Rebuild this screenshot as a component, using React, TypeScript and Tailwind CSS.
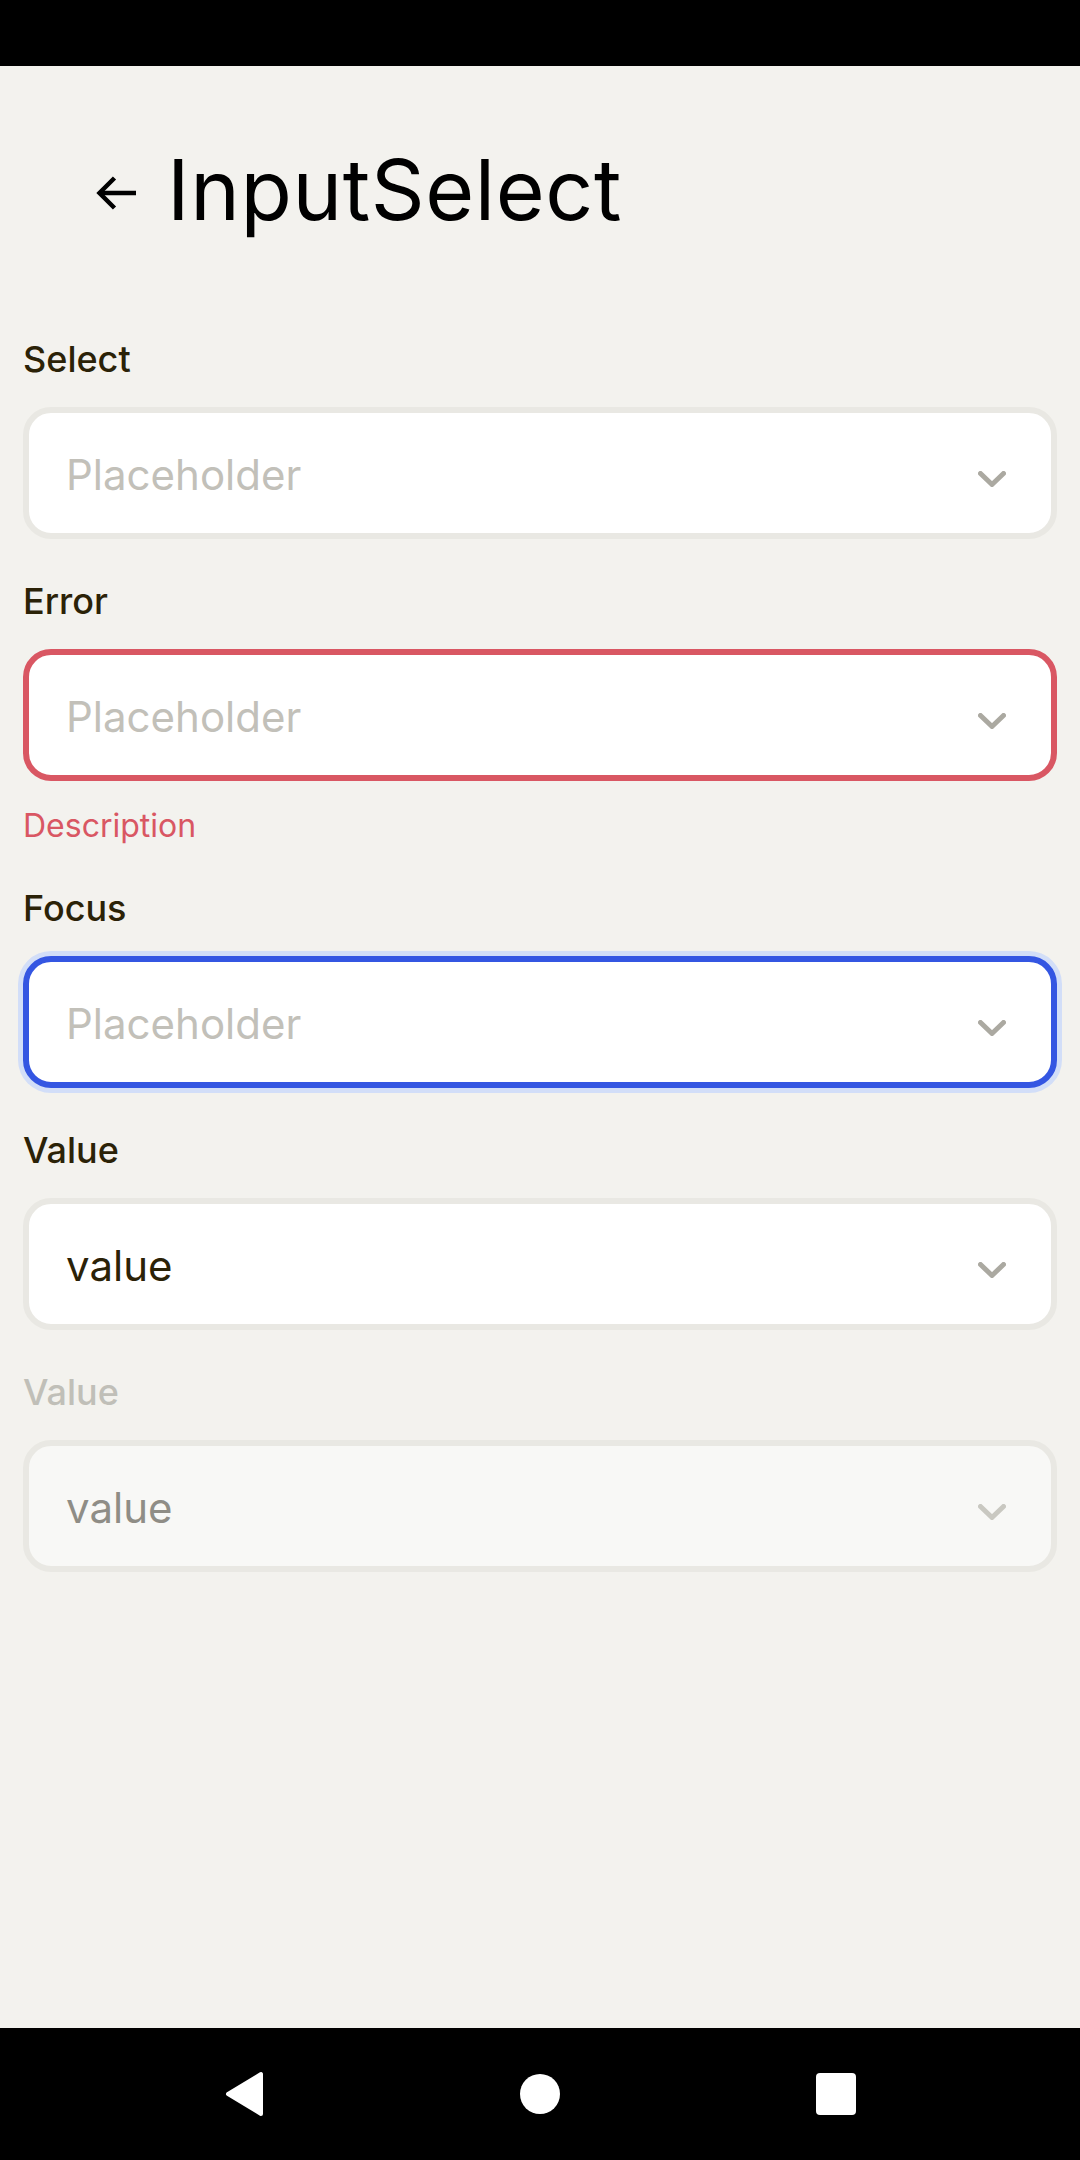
import React from "react";

type Field = {
  label: string;
  text: string;
  hasValue?: boolean;
  state?: "default" | "error" | "focus" | "disabled";
  description?: string;
};

const fields: Field[] = [
  { label: "Select", text: "Placeholder" },
  { label: "Error", text: "Placeholder", state: "error", description: "Description" },
  { label: "Focus", text: "Placeholder", state: "focus" },
  { label: "Value", text: "value", hasValue: true },
  { label: "Value", text: "value", hasValue: true, state: "disabled" },
];

function Chevron({ disabled }: { disabled?: boolean }) {
  return (
    <svg width="28" height="16" viewBox="0 0 28 16" className="mt-[12px] shrink-0">
      <path
        d="M2.5 2.5 L14 13.5 L25.5 2.5"
        fill="none"
        stroke={disabled ? "#c9c8c1" : "#aba9a1"}
        strokeWidth="5"
        strokeLinecap="round"
        strokeLinejoin="round"
      />
    </svg>
  );
}

function SelectField({ field }: { field: Field }) {
  const state = field.state ?? "default";
  const boxClass =
    state === "error"
      ? "border-[#d95763] bg-white"
      : state === "focus"
      ? "border-[#3456e2] bg-white ring-[5px] ring-[#d2def8]"
      : state === "disabled"
      ? "border-[#e9e8e3] bg-[#f8f8f6]"
      : "border-[#e9e8e3] bg-white";

  const textClass = field.hasValue
    ? state === "disabled"
      ? "text-[#8f8d86]"
      : "text-[#2b2207]"
    : "text-[#c2c0b9]";

  return (
    <div className="flex flex-col">
      <div
        className={
          "text-[36px] leading-[36px] font-medium " +
          (state === "disabled" ? "text-[#c0bfb8]" : "text-[#2b2207]")
        }
      >
        {field.label}
      </div>
      <div
        className={
          "mt-[30px] flex h-[132px] items-center justify-between rounded-[28px] border-[6px] pl-[37px] pr-[45px] " +
          boxClass
        }
      >
        <span className={"pt-[3px] text-[42px] leading-[42px] " + textClass}>{field.text}</span>
        <Chevron disabled={state === "disabled"} />
      </div>
      {field.description && (
        <div className="mt-[29px] mb-[4px] text-[32px] leading-[32px] text-[#d95763]">
          {field.description}
        </div>
      )}
    </div>
  );
}

export default function App() {
  return (
    <div
      className="flex h-[2160px] w-[1080px] flex-col bg-[#f3f2ee]"
      style={{ fontFamily: "Inter, 'Liberation Sans', sans-serif" }}
    >
      <div className="h-[66px] shrink-0 bg-black" />

      <main className="flex flex-1 flex-col px-[23px]">
        <div className="mt-[82px] flex h-[84px] items-center">
          <svg width="42" height="34" viewBox="0 0 42 34" className="ml-[72px] mt-[6px] shrink-0">
            <path d="M41 17 H5" fill="none" stroke="#000" strokeWidth="4.5" />
            <path d="M19.5 2 L4.5 17 L19.5 32" fill="none" stroke="#000" strokeWidth="4.5" />
          </svg>
          <h1 className="ml-[30px] text-[84px] leading-[84px] font-normal tracking-[0.6px] text-black">
            InputSelect
          </h1>
        </div>

        <div className="mt-[109px] flex flex-col gap-[44px]">
          {fields.map((f, i) => (
            <SelectField key={i} field={f} />
          ))}
        </div>
      </main>

      <nav className="flex h-[132px] shrink-0 items-center justify-center gap-[256px] bg-black">
        <svg width="40" height="46" viewBox="0 0 40 46">
          <path d="M37 3 L37 43 L4 23 Z" fill="#fff" stroke="#fff" strokeWidth="4" strokeLinejoin="round" />
        </svg>
        <div className="h-[40px] w-[40px] rounded-full bg-white" />
        <div className="h-[42px] w-[40px] rounded-[4px] bg-white" />
      </nav>
    </div>
  );
}
